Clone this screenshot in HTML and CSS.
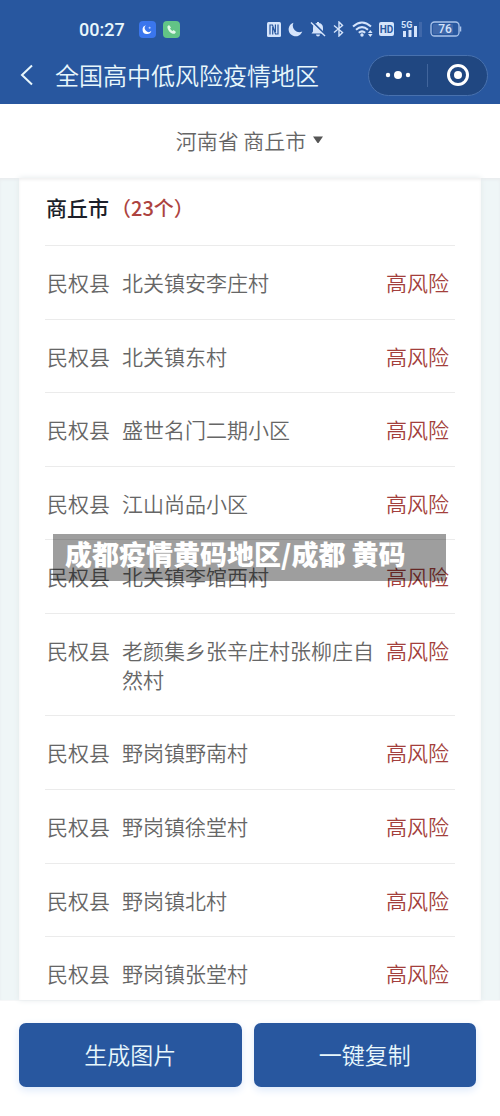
FILE: index.html
```html
<!DOCTYPE html>
<html lang="zh-CN">
<head>
<meta charset="utf-8">
<meta name="viewport" content="width=device-width, initial-scale=1">
<title>全国高中低风险疫情地区</title>
<link rel="stylesheet" href="styles.css">
</head>
<body>
<div class="app">
  <header class="top">
    <div class="status">
      <span class="time">00:27</span>
      <svg class="app-icon" width="17" height="17" viewBox="0 0 17 17"><rect width="17" height="17" rx="4" fill="#3a76ee"/><path d="M7 4.200a4.500 4.500 0 1 0 5.400 5.600A3.600 3.600 0 0 1 7 4.200z" fill="#fff"/><circle cx="10.600" cy="6.800" r="1" fill="#b8d0ff"/></svg>
      <svg class="app-icon" width="17" height="17" viewBox="0 0 17 17"><rect width="17" height="17" rx="4" fill="#62c486"/><path d="M4.400 5.400 6 4l2 2.400-1 1.200q.9 1.700 2.500 2.500l1.200-1 2.300 1.900-1.300 1.700C7.800 13 4.200 9 4.400 5.400z" fill="#e2f8e8"/></svg>
      <div class="signals">
        <svg width="14" height="15" viewBox="0 0 14 15"><rect width="14" height="15" rx="1.500" fill="#d5e4fb"/><path d="M3 12.500V3h2.500L8.500 12H11V2.500M5.700 5v7.500M8.400 2.500V10" fill="none" stroke="#28579f" stroke-width="1.200"/></svg>
        <svg width="15" height="15" viewBox="0 0 15 15"><path d="M5.500 .7A7 7 0 1 0 14.300 9.500 6.600 6.600 0 0 1 5.500 .7z" fill="#d5e4fb"/></svg>
        <svg width="16" height="16" viewBox="0 0 16 16"><path d="M1.500 12.500 3 10.500V7a5 5 0 0 1 4-5V1h2v1a5 5 0 0 1 4 5v3.500l1.500 2zM6 13.500h4a2 2 0 0 1-4 0z" fill="#d5e4fb"/><path d="M2 .5l13 13" stroke="#28579f" stroke-width="2"/><path d="M1 1.500l14 13.500" stroke="#d5e4fb" stroke-width="1.400"/></svg>
        <svg width="12" height="16" viewBox="0 0 12 16"><path d="M1 4.500l8.500 7L6 15V1l3.500 3.500L1 11.500" fill="none" stroke="#d5e4fb" stroke-width="1.400"/></svg>
        <svg class="wifi" width="22" height="16" viewBox="0 0 22 16"><g fill="none" stroke="#d5e4fb" stroke-width="2"><path d="M1 5.500Q10 -2.500 19 5.500"/><path d="M4 8.700Q10 3.500 16 8.700"/><path d="M6.800 11.700Q10 9 13.200 11.700"/></g><circle cx="10" cy="14" r="1.700" fill="#d5e4fb"/><path d="M16 12l2.300-3 2.300 3zM16 13l2.300 3 2.300-3z" fill="#d5e4fb"/></svg>
        <svg width="15" height="14" viewBox="0 0 15 14"><rect width="15" height="14" rx="2" fill="#d5e4fb"/><text class="hd" x="7.500" y="11" text-anchor="middle">HD</text></svg>
        <svg width="22" height="17" viewBox="0 0 22 17"><text class="five-g" x="0" y="7">5G</text><path d="M2 10h3v6H2zM7.500 9h3v7h-3zM13 5h3v11h-3z" fill="#d5e4fb"/><path d="M18 1h3v15h-3z" fill="#4068aa"/></svg>
        <svg width="32" height="16" viewBox="0 0 32 16"><rect x="1" y="1" width="28" height="14" rx="3.500" fill="none" stroke="#a9c3ea" stroke-width="1.300"/><path d="M30.500 5.500v5" stroke="#a9c3ea" stroke-width="1.500"/><rect x="3" y="3" width="20" height="10" rx="1" fill="#4068aa"/><text class="level" x="15" y="12" text-anchor="middle">76</text></svg>
      </div>
    </div>
    <nav class="nav">
      <button class="back" type="button" aria-label="返回"><svg width="14" height="22" viewBox="0 0 14 22"><path d="M12 1.500 2 11l10 9.500" fill="none" stroke="#e8f7fc" stroke-width="2"/></svg></button>
      <h1 class="title">全国高中低风险疫情地区</h1>
      <div class="capsule">
        <button class="cap-btn" type="button" aria-label="更多"><svg width="26" height="10" viewBox="0 0 26 10"><g fill="#fff"><circle cx="3" cy="5" r="2.200"/><circle cx="13" cy="5" r="4"/><circle cx="23" cy="5" r="2.200"/></g></svg></button>
        <button class="cap-btn" type="button" aria-label="关闭"><svg width="24" height="24" viewBox="0 0 24 24"><circle cx="12" cy="12" r="9.500" fill="none" stroke="#fff" stroke-width="3"/><circle cx="12" cy="12" r="4" fill="#fff"/></svg></button>
      </div>
    </nav>
  </header>

  <button class="region" type="button">河南省 商丘市<svg width="12" height="8" viewBox="0 0 12 8"><path d="M1 .5h10L6.500 7h-1z" fill="#555"/></svg></button>

  <main class="content">
    <section class="card">
      <h2 class="city">商丘市<span class="count">（23个）</span></h2>
      <table class="list">
        <tbody class="rows">
          <tr class="row"><td class="county">民权县</td><td class="place">北关镇安李庄村</td><td class="risk">高风险</td></tr>
          <tr class="row"><td class="county">民权县</td><td class="place">北关镇东村</td><td class="risk">高风险</td></tr>
          <tr class="row"><td class="county">民权县</td><td class="place">盛世名门二期小区</td><td class="risk">高风险</td></tr>
          <tr class="row"><td class="county">民权县</td><td class="place">江山尚品小区</td><td class="risk">高风险</td></tr>
          <tr class="row"><td class="county">民权县</td><td class="place">北关镇李馆西村</td><td class="risk">高风险</td></tr>
          <tr class="row"><td class="county">民权县</td><td class="place">老颜集乡张辛庄村张柳庄自然村</td><td class="risk">高风险</td></tr>
          <tr class="row"><td class="county">民权县</td><td class="place">野岗镇野南村</td><td class="risk">高风险</td></tr>
          <tr class="row"><td class="county">民权县</td><td class="place">野岗镇徐堂村</td><td class="risk">高风险</td></tr>
          <tr class="row"><td class="county">民权县</td><td class="place">野岗镇北村</td><td class="risk">高风险</td></tr>
          <tr class="row"><td class="county">民权县</td><td class="place">野岗镇张堂村</td><td class="risk">高风险</td></tr>
        </tbody>
      </table>
    </section>
    <div class="banner">成都疫情黄码地区/成都 黄码</div>
  </main>

  <footer class="actions">
    <button class="action" type="button">生成图片</button>
    <button class="action" type="button">一键复制</button>
  </footer>
</div>
</body>
</html>
```
FILE: styles.css
```css
* {
  box-sizing: border-box;
}

body {
  margin: 0;
  background: #fff;
  color: #666;
  font-family: "Noto Sans CJK SC", sans-serif;
  font-size: 21px;
  font-weight: 350;
  line-height: 29px;
}

button {
  margin: 0;
  padding: 0;
  border: 0;
  background: none;
  color: inherit;
  font: inherit;
}

svg {
  display: block;
  flex: none;
}

.app {
  display: flex;
  flex-direction: column;
  min-height: 100vh;
}

.top {
  background: #28579f;
  color: #e8f7fc;
}

.status {
  display: flex;
  align-items: center;
  height: 46px;
  padding: 12px 38px 0 79px;
}

.time {
  margin-right: 14px;
  font-family: Roboto, sans-serif;
  font-size: 18px;
  font-weight: 500;
}

.app-icon {
  margin-right: 7px;
}

.signals {
  display: flex;
  align-items: center;
  gap: 7px;
  margin-left: auto;
}

.wifi {
  margin-right: -2px;
}

.hd,
.five-g,
.level {
  font-family: Roboto, sans-serif;
  font-weight: 700;
}

.hd {
  fill: #28579f;
  font-size: 10px;
}

.five-g {
  fill: #d5e4fb;
  font-size: 9px;
}

.level {
  fill: #d5e4fb;
  font-size: 12px;
  font-weight: 500;
}

.nav {
  display: flex;
  align-items: center;
  height: 58px;
  padding: 0 12px 0 20px;
}

.title {
  margin: 0 auto 0 21px;
  padding-bottom: 2px;
  font-size: 24px;
  font-weight: 350;
}

.capsule {
  display: flex;
  width: 120px;
  height: 41px;
  border: 1px solid #4871ae;
  border-radius: 21px;
  background: #204781;
}

.cap-btn {
  display: flex;
  flex: 1;
  align-items: center;
  justify-content: center;
}

.cap-btn + .cap-btn {
  position: relative;
  padding-left: 2px;
}

.cap-btn + .cap-btn::before {
  position: absolute;
  top: 8px;
  bottom: 8px;
  left: 0;
  border-left: 1px solid #41659c;
  content: "";
}

.region {
  display: flex;
  align-items: center;
  justify-content: center;
  gap: 6px;
  height: 74px;
  padding-bottom: 2px;
}

.content {
  position: relative;
  display: flex;
  flex: 1;
  padding: 0 19px;
  background: #eff6f7;
  box-shadow: inset 0 2px 3px #e9ecee;
}

.card {
  display: flex;
  flex: 1;
  flex-direction: column;
  padding: 0 26px;
  background: #fff;
  box-shadow: 0 0 6px #e2e8ea, inset 0 2px 3px #f1f1f1;
}

.city {
  display: flex;
  gap: 2px;
  margin: 0;
  padding: 15px 1px 23px;
  border-bottom: 1px solid #ebebeb;
  color: #1c1f2a;
  font-size: 21px;
  font-weight: 500;
}

.count {
  color: #ad4340;
  font-size: 20px;
}

.list,
.rows {
  display: flex;
  flex: 1;
  flex-direction: column;
}

.row {
  display: flex;
  flex: 1 0 auto;
  gap: 12px;
  padding: 22px 6px 21px 2px;
  border-bottom: 1px solid #ebebeb;
}

.row:last-child {
  flex-grow: 0;
  padding-bottom: 12px;
  border-bottom: 0;
}

.county,
.place,
.risk {
  padding: 0;
}

.county,
.risk {
  flex: none;
}

.place {
  flex: 1;
}

.risk {
  color: #a33f3c;
}

.banner {
  position: absolute;
  top: 356px;
  right: 54px;
  left: 53px;
  height: 47px;
  padding: 0 12px;
  background: rgba(0, 0, 0, 0.38);
  color: #fff;
  font-size: 27px;
  font-weight: 900;
  line-height: 40px;
  white-space: nowrap;
}

.actions {
  display: flex;
  gap: 12px;
  padding: 22px 24px 29px 19px;
  border-top: 1px solid #f6f7f8;
}

.action {
  flex: 1;
  height: 64px;
  padding-bottom: 2px;
  border-radius: 7px;
  background: #28579f;
  box-shadow: 0 3px 8px #dce8fa;
  color: #e8f7fc;
  font-size: 23px;
}
```
